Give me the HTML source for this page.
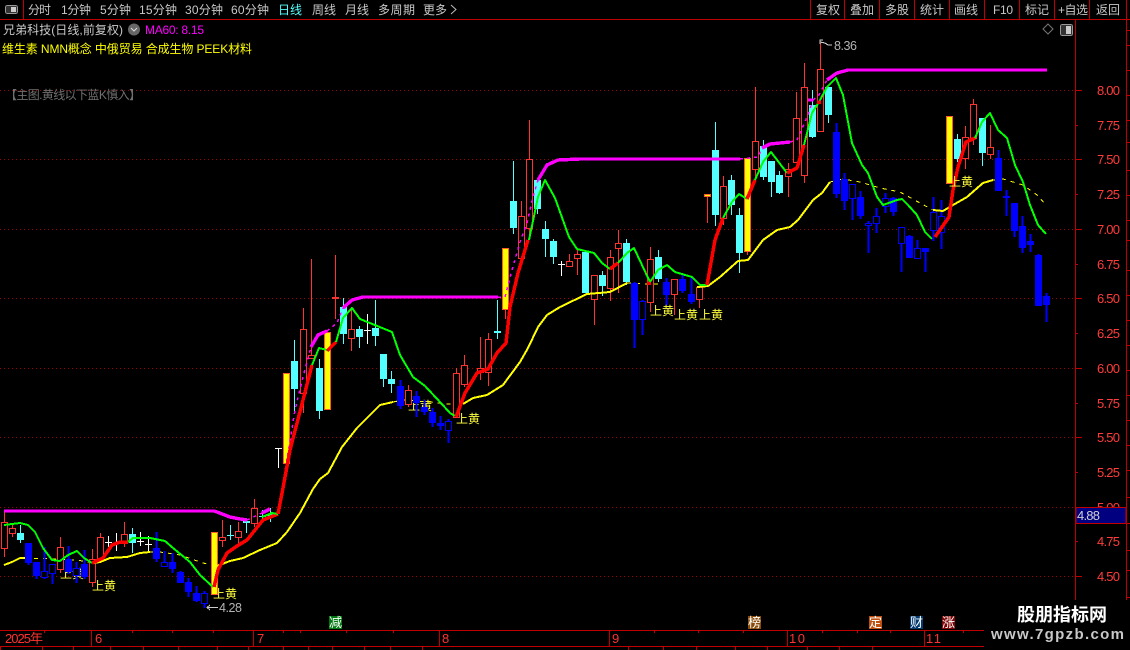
<!DOCTYPE html>
<html lang="zh">
<head>
<meta charset="utf-8">
<title>K线图</title>
<style>
html,body{margin:0;padding:0;background:#000;width:1130px;height:650px;overflow:hidden}
svg{display:block}
text{font-family:"Liberation Sans","WenQuanYi Zen Hei","Noto Sans CJK SC",sans-serif;font-size:12px}
.t{fill:#c8c8c8}
.p{fill:#ff3c3c;font-size:13px}
.l{fill:#ffff3c}
.m{fill:#ff3232;font-size:13px}
.b{fill:#fff;font-size:12px}
polyline{fill:none;stroke-linejoin:round}
.g{stroke:#00ff00;stroke-width:2}
.r{stroke:#ff0000;stroke-width:3.5}
.y{stroke:#ffff00;stroke-width:2}
.d{stroke:#ffff00;stroke-width:1;stroke-dasharray:4 5}
.mg{stroke:#ff00ff;stroke-width:3.4}
.md{stroke:#ff00ff;stroke-width:1.5;stroke-dasharray:3 4}
</style>
</head>
<body>
<svg width="1130" height="650" viewBox="0 0 1130 650" xmlns="http://www.w3.org/2000/svg">
<rect width="1130" height="650" fill="#000"/>

<!-- grid -->
<g stroke="#a00000" stroke-width="1" stroke-dasharray="1 3" shape-rendering="crispEdges">
<path d="M0 90.5H1075M0 159.5H1075M0 229.5H1075M0 298.5H1075M0 368.5H1075M0 437.5H1075M0 507.5H1075M0 576.5H1075"/>
</g>

<!-- frame -->
<g stroke="#c00000" stroke-width="1" shape-rendering="crispEdges" fill="none">
<path d="M0 19.5H1130M23.5 0V19M810.5 0V19M844.5 0V19M879.5 0V19M914.5 0V19M949.5 0V19M984.5 0V19M1019.5 0V19M1054.5 0V19M1089.5 0V19"/>
<path d="M1075.5 19V600M1126.5 0V600"/>
<path d="M1075 90.5h7M1075 125.5h3M1075 159.5h7M1075 194.5h3M1075 229.5h7M1075 264.5h3M1075 298.5h7M1075 333.5h3M1075 368.5h7M1075 403.5h3M1075 437.5h7M1075 472.5h3M1075 507.5h7M1075 541.5h3M1075 576.5h7"/>
<path d="M1126 30.5h4M1126 45.5h4M1126 70.5h4M1126 95.5h4M1126 120.5h4M1126 142.5h4M1126 170.5h4M1126 195.5h4M1126 220.5h4M1126 240.5h4M1126 270.5h4M1126 295.5h4M1126 320.5h4M1126 345.5h4M1126 370.5h4M1126 395.5h4M1126 420.5h4M1126 445.5h4M1126 470.5h4M1126 497.5h4M1126 523.5h4M1126 550.5h4M1126 570.5h4M1126 597.5h4"/>
<path d="M0 630.5H984M0 646.5H984"/>
<path d="M91.5 630V646M253.5 630V646M439.5 630V646M609.5 630V646M787.5 630V646M924.5 630V646"/>
<path d="M44.5 630v3M132.5 630v3M172.5 630v3M213.5 630v3M283.5 630v3M300.5 630v3M346.5 630v3M393.5 630v3M654.5 630v3M698.5 630v3M743.5 630v3M822.5 630v3M857.5 630v3M890.5 630v3M963.5 630v3"/>
<path d="M0.5 646v4M42.5 646v4M73.5 646v4M110.5 646v4M143.5 646v4M178.5 646v4M217.5 646v4M248.5 646v4M283.5 646v4M308.5 646v4M332.5 646v4M364.5 646v4M390.5 646v4M422.5 646v4M628.5 646v4M663.5 646v4M696.5 646v4M735.5 646v4M767.5 646v4M807.5 646v4M839.5 646v4M872.5 646v4"/>
</g>

<!-- toolbar -->
<g shape-rendering="crispEdges">
<rect x="5.5" y="5.5" width="12" height="8" rx="2" fill="#333" stroke="#999"/>
<rect x="11" y="7" width="5" height="5" fill="#ccc"/>
<rect x="1060.5" y="24.5" width="12" height="11" rx="2" fill="#333" stroke="#999"/>
<rect x="1066" y="26" width="5" height="8" fill="#ccc"/>
</g>
<text class="t" x="28" y="14" textLength="23">分时</text>
<text class="t" x="61" y="14" textLength="30">1分钟</text>
<text class="t" x="100" y="14" textLength="31">5分钟</text>
<text class="t" x="139" y="14" textLength="38">15分钟</text>
<text class="t" x="185" y="14" textLength="38">30分钟</text>
<text class="t" x="231" y="14" textLength="38">60分钟</text>
<text x="278" y="14" fill="#54ffff" textLength="24">日线</text>
<text class="t" x="312" y="14" textLength="24">周线</text>
<text class="t" x="345" y="14" textLength="24">月线</text>
<text class="t" x="378" y="14" textLength="37">多周期</text>
<text class="t" x="423" y="14" textLength="24">更多</text>
<path d="M451 5l5 4.5-5 4.5" fill="none" stroke="#bbb"/>
<text class="t" x="816" y="14" textLength="24">复权</text>
<text class="t" x="850" y="14" textLength="24">叠加</text>
<text class="t" x="885" y="14" textLength="24">多股</text>
<text class="t" x="920" y="14" textLength="24">统计</text>
<text class="t" x="954" y="14" textLength="24">画线</text>
<text class="t" x="993" y="14" textLength="20">F10</text>
<text class="t" x="1025" y="14" textLength="24">标记</text>
<text class="t" x="1058" y="14" textLength="30">+自选</text>
<text class="t" x="1096" y="14" textLength="24">返回</text>

<!-- info lines -->
<text class="t" x="3" y="34" textLength="120">兄弟科技(日线,前复权)</text>
<circle cx="134" cy="29.5" r="6" fill="#666"/>
<path d="M131 28l3 3 3-3" fill="none" stroke="#ddd"/>
<text x="145" y="34" fill="#ff00ff" textLength="59">MA60: 8.15</text>
<text x="2" y="53" fill="#ffff00" textLength="250">维生素 NMN概念 中俄贸易 合成生物 PEEK材料</text>
<text x="5" y="99" fill="#707070" textLength="136">【主图.黄线以下蓝K慎入】</text>
<path d="M1048 24l5 5-5 5-5-5z" fill="none" stroke="#777"/>

<!-- price labels -->
<text class="p" x="1097" y="95" textLength="23">8.00</text>
<text class="p" x="1097" y="130" textLength="23">7.75</text>
<text class="p" x="1097" y="164" textLength="23">7.50</text>
<text class="p" x="1097" y="199" textLength="23">7.25</text>
<text class="p" x="1097" y="234" textLength="23">7.00</text>
<text class="p" x="1097" y="269" textLength="23">6.75</text>
<text class="p" x="1097" y="303" textLength="23">6.50</text>
<text class="p" x="1097" y="338" textLength="23">6.25</text>
<text class="p" x="1097" y="373" textLength="23">6.00</text>
<text class="p" x="1097" y="408" textLength="23">5.75</text>
<text class="p" x="1097" y="442" textLength="23">5.50</text>
<text class="p" x="1097" y="477" textLength="23">5.25</text>
<text class="p" x="1097" y="512" textLength="23">5.00</text>
<text class="p" x="1097" y="546" textLength="23">4.75</text>
<text class="p" x="1097" y="581" textLength="23">4.50</text>
<rect x="1076" y="507.5" width="50" height="16" fill="#000080" stroke="#c00000" shape-rendering="crispEdges"/>
<text x="1077" y="520" fill="#d0d0d0" style="font-size:13px" textLength="23">4.88</text>

<!-- labels behind candles -->
<text class="l" x="60" y="578">上黄</text>
<text class="l" x="408" y="410">上黄</text>

<!-- dashed yellow -->
<g shape-rendering="crispEdges">
<polyline class="d" points="25,558 60,559 84,561 92,563"/>
<polyline class="d" points="150,552 160,552 180,555 200,562 210,565"/>
<polyline class="d" points="393,402 403,400 430,402 457,405"/>
<polyline class="d" points="627,283 650,284 687,285"/>
<polyline class="d" points="830,182 843,179 860,182 880,188 900,192 920,203 933,210"/>
<polyline class="d" points="993,180 1003,179 1023,185 1037,195 1046,205"/>
</g>

<!-- candles -->
<g shape-rendering="crispEdges">
<!-- cyan -->
<path stroke="#54ffff" fill="none" d="M20.5 525V543M132.5 528V553M230.5 525V540M227 535.5h7M246.5 521V533M262.5 510V523M259 516.5h7M270.5 508V522M294.5 340V413M319.5 359V419M343.5 298V344M359.5 326V348M375.5 300V346M383.5 354V387M391.5 371V393M497.5 300V339M513.5 161V234M537.5 180V214M545.5 221V257M553.5 239V264M585.5 250V293M602.5 271V296M626.5 239V285M658.5 250V282M715.5 122V226M731.5 175V215M739.5 208V273M763.5 140V180M771.5 161V197M779.5 171V194M812.5 90V138M828.5 87V123M957.5 134V162M982.5 118V166"/>
<path fill="#54ffff" d="M17 533h7V540h-7zM129 534h7V543h-7zM243 521h7V523h-7zM267 514h7V516h-7zM291 361h7V389h-7zM316 368h7V411h-7zM340 307h7V334h-7zM356 329h7V337h-7zM372 328h7V336h-7zM380 354h7V379h-7zM388 379h7V384h-7zM494 331h7v2h-7zM510 201h7V228h-7zM534 180h7V209h-7zM542 229h7V239h-7zM550 241h7V257h-7zM582 252h7V293h-7zM599 275h7V286h-7zM623 243h7V282h-7zM655 257h7V279h-7zM712 150h7V215h-7zM728 180h7V205h-7zM736 215h7V253h-7zM760 146h7V177h-7zM768 161h7V182h-7zM776 175h7V193h-7zM809 105h7V137h-7zM825 87h7V115h-7zM954 139h7V159h-7zM979 118h7V153h-7z"/>
<!-- white crosses -->
<path stroke="#fff" fill="none" d="M108.5 536V547M105 542.5h7M116.5 533V551M113 543.5h7M140.5 532V546M137 541.5h7M148.5 536V552M145 544.5h7M278.5 448V468M275 448.5h7M367.5 314V344M364 330.5h7M561.5 261V276M558 264.5h7"/>
<!-- red wicks -->
<path stroke="#ff3232" fill="none" d="M4.5 511V557M12.5 525V537M60.5 537V573M92.5 549V587M100.5 533V563M124.5 522V547M222.5 520V547M238.5 522V545M254.5 499V527M303.5 308V413M311.5 259V358M335.5 255V319M351.5 307V351M408.5 385V407M456.5 368V418M464.5 355V387M480.5 337V380M488.5 333V386M505.5 309V319M521.5 201V258M529.5 120V237M569.5 254V266M577.5 250V275M594.5 275V325M610.5 250V301M618.5 230V293M650.5 247V312M674.5 279V315M699.5 287V308M707.5 194V223M723.5 176V225M747.5 251V255M755.5 87V178M788.5 163V197M796.5 92V162M804.5 63V183M820.5 43V131M965.5 126V169M973.5 99V145M990.5 125V159"/>
<path stroke="#ff3232" fill="#000" d="M1.5 522.5h6V548.5h-6zM9.5 528.5h6V533.5h-6zM57.5 547.5h6V569.5h-6zM89.5 559.5h6V582.5h-6zM97.5 537.5h6V559.5h-6zM121.5 534.5h6V543.5h-6zM219.5 537.5h6V540.5h-6zM235.5 531.5h6V537.5h-6zM251.5 508.5h6V523.5h-6zM300.5 329.5h6V393.5h-6zM308.5 355.5h6V358.5h-6zM348.5 329.5h6V338.5h-6zM405.5 390.5h6V404.5h-6zM453.5 373.5h6V417.5h-6zM461.5 365.5h6V384.5h-6zM477.5 368.5h6V372.5h-6zM485.5 339.5h6V372.5h-6zM518.5 216.5h6V258.5h-6zM526.5 159.5h6V228.5h-6zM566.5 261.5h6V266.5h-6zM574.5 254.5h6V258.5h-6zM591.5 275.5h6V299.5h-6zM607.5 257.5h6V288.5h-6zM615.5 243.5h6V248.5h-6zM647.5 259.5h6V302.5h-6zM671.5 279.5h6V294.5h-6zM696.5 287.5h6V299.5h-6zM720.5 186.5h6V218.5h-6zM752.5 141.5h6V169.5h-6zM785.5 169.5h6V176.5h-6zM793.5 118.5h6V162.5h-6zM801.5 87.5h6V175.5h-6zM817.5 69.5h6V131.5h-6zM962.5 137.5h6V158.5h-6zM970.5 104.5h6V138.5h-6zM987.5 147.5h6V154.5h-6z"/>
<path fill="#ff3232" d="M332 297h7v2h-7z"/>
<!-- blue -->
<path stroke="#0000ff" fill="none" stroke-width="2" d="M28.5 543V565M36.5 562V579M44.5 547V579M52.5 564V584M68.5 546V574M76.5 562V583M84.5 550V579M156.5 532V562M164.5 551V566M172.5 553V573M180.5 571V583M188.5 578V597M196.5 586V602M204.5 591V608M400.5 380V409M416.5 391V417M424.5 400V415M432.5 408V427M440.5 416V430M448.5 419V443M634.5 282V348M642.5 300V335M666.5 278V305M682.5 275V293M691.5 278V304M836.5 123V198M844.5 173V210M852.5 184V220M860.5 191V219M868.5 221V253M876.5 208V233M885.5 193V213M893.5 197V216M901.5 227V272M909.5 235V258M917.5 240V258M925.5 248V272M933.5 197V241M941.5 200V249M998.5 150V191M1006.5 190V216M1014.5 203V237M1022.5 216V253M1030.5 234V252M1038.5 254V306M1046.5 293V322"/>
<path fill="#0000ff" d="M25 543h7V563h-7zM33 562h7V576h-7zM65 559h7V572h-7zM81 564h7V577h-7zM153 548h7V559h-7zM169 562h7V569h-7zM177 572h7V583h-7zM185 582h7V592h-7zM193 593h7V601h-7zM397 386h7V406h-7zM413 396h7V403h-7zM421 407h7V412h-7zM429 412h7V423h-7zM437 423h7V426h-7zM631 283h7V320h-7zM663 282h7V295h-7zM679 279h7V291h-7zM688 294h7V302h-7zM833 132h7V194h-7zM841 179h7V201h-7zM857 197h7V216h-7zM890 198h7V212h-7zM906 236h7V258h-7zM922 248h7V252h-7zM995 158h7V191h-7zM1003 196h7V198h-7zM1011 203h7V231h-7zM1019 226h7V248h-7zM1027 241h7V245h-7zM1035 255h7V306h-7zM1043 296h7V305h-7z"/>
<path stroke="#0000ff" fill="#000" d="M41.5 571.5h6V577.5h-6zM49.5 564.5h6V573.5h-6zM73.5 568.5h6V575.5h-6zM161.5 562.5h6V566.5h-6zM201.5 593.5h6V603.5h-6zM445.5 421.5h6V430.5h-6zM639.5 301.5h6V319.5h-6zM849.5 184.5h6V198.5h-6zM865.5 223.5h6V225.5h-6zM873.5 216.5h6V223.5h-6zM882.5 198.5h6V206.5h-6zM898.5 227.5h6V243.5h-6zM914.5 248.5h6V258.5h-6zM930.5 212.5h6V230.5h-6zM938.5 216.5h6V232.5h-6z"/>
<!-- yellow bars -->
<g fill="#ffff00" stroke="#ff5a28">
<rect x="211.5" y="532.5" width="6" height="62"/>
<rect x="283.5" y="373.5" width="6" height="90"/>
<rect x="324.5" y="332.5" width="6" height="77"/>
<rect x="502.5" y="248.5" width="6" height="61"/>
<rect x="744.5" y="158.5" width="6" height="93"/>
<rect x="946.5" y="116.5" width="6" height="67"/>
<rect x="704.5" y="194.5" width="6" height="2"/>
</g>
</g>

<!-- lines -->
<g shape-rendering="crispEdges">
<polyline class="y" points="4,565 12,562 20,558 25,558"/>
<polyline class="y" points="93,563 100,562 110,558 127,557 140,553 150,552"/>
<polyline class="y" points="217,566 230,561 243,558 260,550 277,543 287,532 300,513 313,489 320,479 328,473 342,447 357,428 380,405 393,402"/>
<polyline class="y" points="463,404 473,398 487,395 503,385 520,362 528,348 538,327 547,315 560,307 587,294 610,292 627,283"/>
<polyline class="y" points="697,287 708,286 720,277 738,261 748,260 763,240 777,230 790,227 798,220 813,200 822,193 830,182"/>
<polyline class="y" points="933,210 943,211 953,205 967,197 983,183 993,180"/>

<polyline class="mg" points="4,511 214,511 217,512 230,517 240,519 247,520"/>
<polyline class="mg" points="262,513 270,509"/>
<polyline class="md" points="247,520 262,513"/>
<polyline class="md" points="283,483 288,453 295,410 303,377 311,347"/>
<polyline class="mg" points="311,347 318,335 327,331"/>
<polyline class="md" points="327,331 337,323 343,308"/>
<polyline class="mg" points="343,308 352,300 363,297 498,297"/>
<polyline class="md" points="498,297 505,297 512,270 520,242 527,223 533,197 538,180"/>
<polyline class="mg" points="538,180 547,165 558,160 580,159 740,159"/>
<polyline class="md" points="740,159 758,157 762,148"/>
<polyline class="mg" points="762,148 770,144 790,142"/>
<polyline class="md" points="790,142 797,140 808,115 813,100"/>
<polyline class="mg" points="808,100 813,100"/>
<polyline class="md" points="813,100 819,95 827,80"/>
<polyline class="mg" points="827,80 837,73 848,70 1047,70"/>

<polyline class="g" points="4,525 20,523 28,525 35,532 43,548 52,560 60,561 68,555 77,551 84,558 92,563"/>
<polyline class="r" points="92,563 103,558 112,545 120,542 128,542"/>
<polyline class="g" points="128,542 133,538 150,538 165,541 173,548 190,562 200,575 213,587"/>
<polyline class="r" points="214,587 218,570 227,553 237,546 247,540 263,520 278,514"/>
<polyline class="g" points="262,517 272,513 278,514"/>
<polyline class="r" points="278,514 283,488 290,450 303,400 312,365"/>
<polyline class="g" points="312,365 319,348 327,350"/>
<polyline class="r" points="327,351 336,342"/>
<polyline class="g" points="336,342 343,318 352,308 360,319 392,332 400,355 413,377 425,386 440,402 450,413 455,416"/>
<polyline class="r" points="456,417 465,393 477,373 488,369 497,353 506,343 510,307 518,273 528,240"/>
<polyline class="g" points="529,240 538,197 545,180 555,198 569,237 577,249 594,253 602,263 610,269"/>
<polyline class="r" points="610,269 618,263"/>
<polyline class="g" points="618,263 627,253 634,248 650,282"/>
<polyline class="r" points="647,283 651,283"/>
<polyline class="g" points="650,282 658,270 667,265 675,272 692,277 700,285 707,285"/>
<polyline class="r" points="707,285 715,240 723,218"/>
<polyline class="g" points="723,218 732,202 739,194 747,199"/>
<polyline class="r" points="747,199 755,180"/>
<polyline class="g" points="755,180 763,162 771,152 787,173"/>
<polyline class="r" points="787,173 797,168 804,145"/>
<polyline class="g" points="804,145 812,113 819,102 827,87 836,78 843,95 852,143 862,165 868,173 877,197 883,205 897,200 902,199 908,205 917,215 925,232 932,239"/>
<polyline class="r" points="817,102 821,102"/>
<polyline class="r" points="935,237 949,217 953,190 958,167 966,142 975,138"/>
<polyline class="g" points="975,138 982,122 990,113 998,130 1007,138 1015,165 1023,182 1030,205 1038,225 1046,234"/>
</g>

<!-- labels over -->
<text class="l" x="92" y="590">上黄</text>
<text class="l" x="213" y="598">上黄</text>
<text class="l" x="456" y="423">上黄</text>
<text class="l" x="650" y="315">上黄</text>
<text class="l" x="674" y="319">上黄</text>
<text class="l" x="699" y="319">上黄</text>
<text class="l" x="949" y="186">上黄</text>

<!-- hi/lo marks -->
<text x="219" y="612" fill="#b4b4b4" style="font-size:12.5px" textLength="23">4.28</text>
<path d="M218 607.5H207M210 605l-3 2.5 3 2.5" fill="none" stroke="#ccc" shape-rendering="crispEdges"/>
<text x="834" y="50" fill="#b4b4b4" style="font-size:12.5px" textLength="23">8.36</text>
<path d="M820 44V40h3M820 42l5 1 3 2h4" fill="none" stroke="#ccc" shape-rendering="crispEdges"/>

<!-- event badges -->
<rect x="329" y="616" width="13" height="13" fill="#007a10"/>
<text class="b" x="329" y="627" style="font-size:13px">减</text>
<rect x="748" y="616" width="13" height="13" fill="#8a4a08"/>
<text class="b" x="748" y="627" style="font-size:13px">榜</text>
<rect x="869" y="616" width="13" height="13" fill="#c0500f"/>
<text class="b" x="869" y="627" style="font-size:13px">定</text>
<rect x="910" y="616" width="13" height="13" fill="#033a6e"/>
<text class="b" x="910" y="627" style="font-size:13px">财</text>
<rect x="942" y="616" width="13" height="13" fill="#7e0606"/>
<text class="b" x="942" y="627" style="font-size:13px">涨</text>

<!-- date axis -->
<text class="m" x="5" y="643" textLength="38">2025年</text>
<text class="m" x="95" y="643">6</text>
<text class="m" x="257" y="643">7</text>
<text class="m" x="442" y="643">8</text>
<text class="m" x="612" y="643">9</text>
<text class="m" x="789" y="643" textLength="16">10</text>
<text class="m" x="926" y="643" textLength="15">11</text>

<!-- watermark -->
<rect x="984" y="600" width="146" height="50" fill="#000"/>
<text x="1017" y="621" fill="#fff" style="font-size:18px;font-weight:bold;font-family:'Noto Sans CJK SC','WenQuanYi Zen Hei',sans-serif" textLength="90">股朋指标网</text>
<text x="991" y="639" fill="#c8c8c8" style="font-size:15px;font-weight:bold" textLength="133">www.7gpzb.com</text>
</svg>
</body>
</html>
